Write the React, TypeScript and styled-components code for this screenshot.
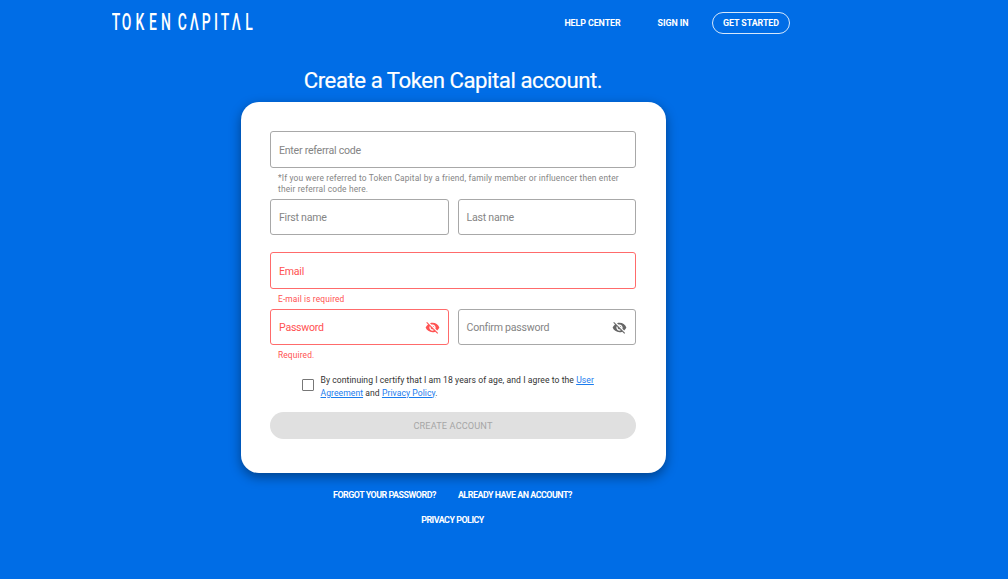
import React from 'react';
import styled, { createGlobalStyle } from 'styled-components';
import { MdVisibilityOff } from 'react-icons/md';

const GlobalStyle = createGlobalStyle`
  *{box-sizing: border-box; margin: 0; padding: 0;}
  body{
    background-color: #006de6;
    font-family: Roboto, "Liberation Sans", sans-serif;
    overflow: hidden;
  }
  a{ color: inherit; text-decoration: none; }
`;
const Page = styled.div`
  width: 906px;
  height: 579px;
  color: #fff;
`;
const Header = styled.header`
  display: flex;
  align-items: center;
  height: 45px;
  padding: 0 116px 0 112px;
  >svg{
    display: block;
    margin-right: auto;
  }
`;
const NavLink = styled.a`
  font-size: 8.9px;
  font-weight: 700;
  letter-spacing: -0.08px;
  white-space: nowrap;
  margin-right: 37px;
`;
const StartButton = styled.button`
  width: 78px;
  height: 22px;
  margin-left: -13.5px;
  border: 1px solid #d5e7fb;
  border-radius: 11px;
  background: none;
  color: #fff;
  font-family: inherit;
  font-size: 8.9px;
  font-weight: 700;
  letter-spacing: -0.08px;
  white-space: nowrap;
`;
const Title = styled.h1`
  height: 56.5px;
  padding-top: 20px;
  font-size: 22.2px;
  font-weight: 400;
  line-height: 30px;
  letter-spacing: -0.46px;
  text-align: center;
  -webkit-text-stroke: 0.2px #fff;
`;
const Card = styled.form`
  width: 425px;
  height: 371px;
  margin: 0 auto;
  padding: 29.5px 29.5px;
  border-radius: 18px;
  background-color: #fff;
  box-shadow: 0 4px 12px rgba(0,0,0,0.4);
`;
const Row = styled.div<{ $height: number }>`
  display: flex;
  gap: 9px;
  height: ${p => p.$height}px;
`;
const Field = styled.label<{ $error?: boolean }>`
  flex: 1;
  display: flex;
  align-items: center;
  justify-content: space-between;
  padding: 1px 8px 0;
  border: 1px solid ${p => p.$error ? '#ff6b6b' : '#a8a8a8'};
  border-radius: 3px;
  color: ${p => p.$error ? '#ff5252' : '#858585'};
  font-size: 10.6px;
  letter-spacing: -0.25px;
  >svg{
    color: ${p => p.$error ? '#ff5252' : '#666'};
  }
`;
const Hint = styled.p<{ $error?: boolean; $height: number }>`
  height: ${p => p.$height}px;
  padding: 5px 8px 0;
  color: ${p => p.$error ? '#ff5252' : '#858585'};
  font-size: 8.4px;
  line-height: 10.5px;
  letter-spacing: ${p => p.$error ? '0.13px' : '0.155px'};
`;
const Terms = styled.label`
  display: flex;
  align-items: flex-start;
  height: 26px;
  padding-left: 32px;
  color: #333;
  font-size: 8.6px;
  line-height: 12.5px;
  letter-spacing: 0.06px;
  >p{
    width: 290px;
    margin-left: 6.5px;
  }
  a{
    color: #1a7cee;
    text-decoration: underline;
  }
`;
const Checkbox = styled.span`
  width: 12px;
  height: 12px;
  margin-top: 5px;
  border: 1px solid #777;
  border-radius: 1px;
`;
const SubmitButton = styled.button`
  display: block;
  width: 100%;
  height: 27px;
  margin-top: 12px;
  border: none;
  border-radius: 14px;
  background-color: #e0e0e0;
  color: #a6a6a6;
  font-family: inherit;
  font-size: 9.2px;
  letter-spacing: 0.12px;
`;
const Links = styled.nav`
  display: flex;
  flex-wrap: wrap;
  justify-content: center;
  gap: 14px 22px;
  width: 300px;
  margin: 17px auto 0;
  padding-right: 1px;
  font-size: 8.9px;
  font-weight: 700;
  line-height: 11px;
  letter-spacing: -0.48px;
`;

const Logo = () => (
  <svg width="142" height="28" viewBox="0 0 142 28" fill="#fff">
    <text transform="scale(0.58 1)" y="21" fontSize="24" fontWeight="500" fontFamily="Roboto" textAnchor="middle"
      x="6.9 25.2 48.2 70.7 93.1 103.5 121 141.9 162.5 179.3 194.8 214.3 236.2">TOKEN CΛPITΛL</text>
  </svg>
);

function App() {
  return (
    <Page>
      <GlobalStyle/>
      <Header>
        <Logo/>
        <NavLink href="#">HELP CENTER</NavLink>
        <NavLink href="#">SIGN IN</NavLink>
        <StartButton>GET STARTED</StartButton>
      </Header>
      <Title>Create a Token Capital account.</Title>
      <Card>
        <Row $height={37}>
          <Field>Enter referral code</Field>
        </Row>
        <Hint $height={31}>
          *If you were referred to Token Capital by a friend, family member or influencer then enter
          their referral code here.
        </Hint>
        <Row $height={36}>
          <Field>First name</Field>
          <Field>Last name</Field>
        </Row>
        <Hint $height={17}/>
        <Row $height={37}>
          <Field $error>Email</Field>
        </Row>
        <Hint $error $height={20}>E-mail is required</Hint>
        <Row $height={36}>
          <Field $error>Password<MdVisibilityOff size={15}/></Field>
          <Field>Confirm password<MdVisibilityOff size={15}/></Field>
        </Row>
        <Hint $error $height={29}>Required.</Hint>
        <Terms>
          <Checkbox/>
          <p>
            By continuing I certify that I am 18 years of age, and I agree to the <a href="#">User
            Agreement</a> and <a href="#">Privacy Policy</a>.
          </p>
        </Terms>
        <SubmitButton disabled>CREATE ACCOUNT</SubmitButton>
      </Card>
      <Links>
        <a href="#">FORGOT YOUR PASSWORD?</a>
        <a href="#">ALREADY HAVE AN ACCOUNT?</a>
        <a href="#">PRIVACY POLICY</a>
      </Links>
    </Page>
  );
}
export default App
